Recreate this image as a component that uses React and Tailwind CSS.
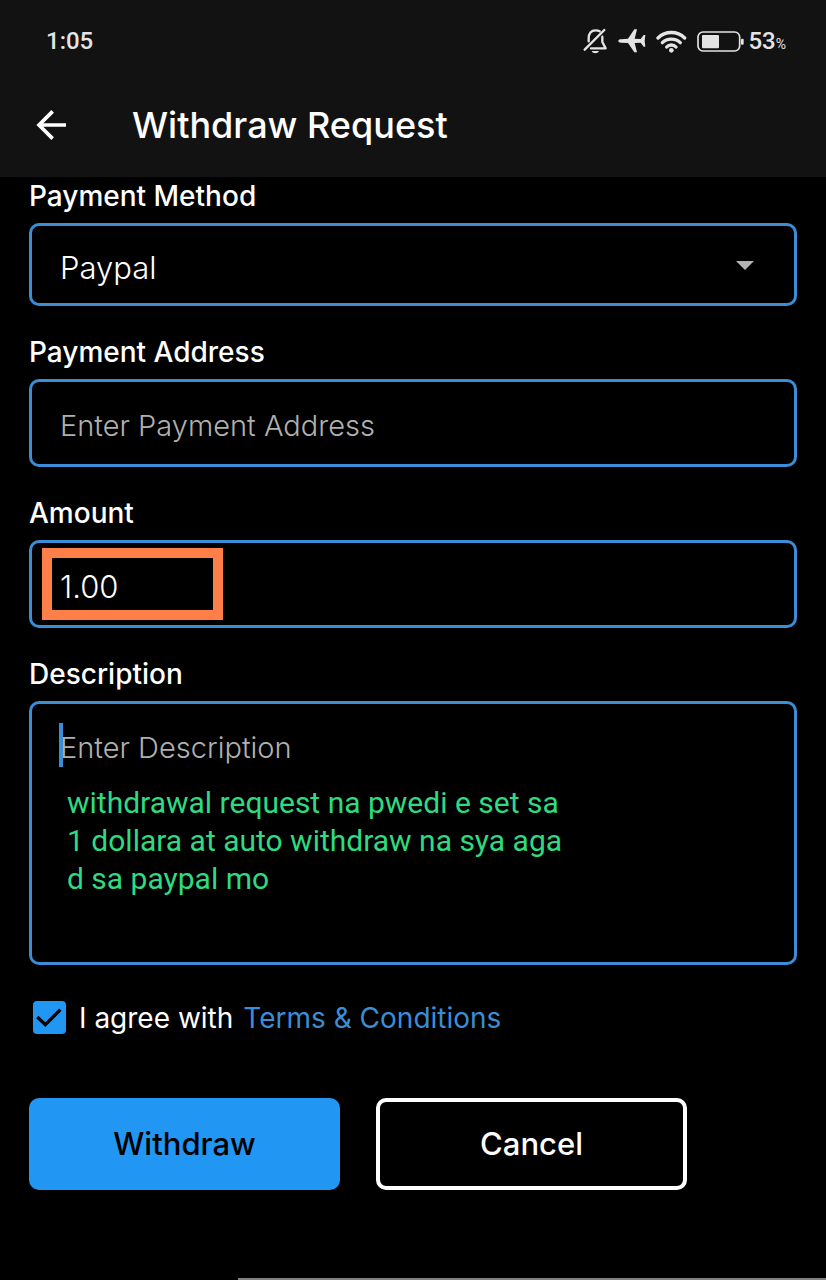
import React, { useState } from 'react';

const StatusBar = () => (
  <div className="flex items-center justify-between pt-[25px] pl-[46px] pr-10 font-[Roboto,sans-serif] text-[#e4e4e4]">
    <span className="text-2xl font-medium">1:05</span>
    <div className="flex items-center gap-[10px]">
      {/* silent mode */}
      <svg width="25" height="26" viewBox="78 50 75 78" fill="none" stroke="currentColor" strokeWidth="7" strokeLinecap="round" strokeLinejoin="round">
        <path d="M83 115L142 56" />
        <path d="M95 90V82C95 66 103 57 116 57c5 0 9 1 12 3" />
        <path d="M136 76V92l10 19H102" />
        <path d="M104 119h22c-4 9-18 9-22 0z" fill="currentColor" stroke="none" />
      </svg>
      {/* airplane mode */}
      <svg width="28" height="24" viewBox="180 53 84 72" fill="currentColor">
        <path d="M181 89c0-3 3-5 8-5l21-2 19-28h8l-7 28 18 1 9-12h5l-2 18 2 17h-5l-9-12-18 1 7 28h-8l-19-28-21-1c-5 0-8-2-8-5z" />
      </svg>
      {/* wifi */}
      <svg width="31" height="23" viewBox="290 54 93 69" fill="none" stroke="currentColor" strokeWidth="10" strokeLinecap="round">
        <path d="M296 78C318 56 354 56 376 78" />
        <path d="M309 92C323 78 349 78 363 92" />
        <path d="M322 105C329 97 343 97 350 105" />
        <circle cx="336" cy="115" r="7" fill="currentColor" stroke="none" />
      </svg>
      <div className="flex items-center gap-1">
        <svg width="47" height="21" viewBox="411 57 141 63" fill="currentColor">
          <rect x="414" y="60" width="125" height="57" rx="15" fill="none" stroke="currentColor" strokeWidth="5" />
          <rect x="426" y="69" width="51" height="40" rx="3" />
          <rect x="543" y="80" width="8" height="18" rx="3" />
        </svg>
        <span className="flex items-baseline">
          <span className="text-2xl font-medium">53</span>
          <span className="text-sm">%</span>
        </span>
      </div>
    </div>
  </div>
);

const Field = ({ id, label, children }) => (
  <div className="mb-[30px]">
    <label htmlFor={id} className="mb-[11px] block text-[28px] leading-8 font-medium text-white">
      {label}
    </label>
    <div className="relative">{children}</div>
  </div>
);

const App = () => {
  const [method, setMethod] = useState('Paypal');
  const [address, setAddress] = useState('');
  const [amount, setAmount] = useState('1.00');
  const [description, setDescription] = useState('');
  const [agreed, setAgreed] = useState(true);

  return (
    <div className="flex min-h-screen flex-col bg-black font-[Inter,sans-serif] text-white">
      <header className="bg-[#121212] pb-8">
        <StatusBar />
        <div className="mt-12 flex items-center pl-9">
          <button type="button" aria-label="Back">
            <svg width="30" height="30" viewBox="108 302 90 90" fill="none" stroke="currentColor" strokeWidth="11">
              <path d="M198 347H117M158 306L117 347L158 388" />
            </svg>
          </button>
          <h1 className="ml-[66px] text-[36px] leading-10 font-medium">Withdraw Request</h1>
        </div>
      </header>

      <form className="flex-1 px-[29px] pt-[3px]" onSubmit={e => e.preventDefault()}>
        <Field id="method" label="Payment Method">
          <select
            id="method"
            value={method}
            onChange={e => setMethod(e.target.value)}
            className="block h-[83px] w-full appearance-none rounded-[10px] border-3 border-[#3b8dd6] bg-black pt-2 pl-7 text-[31px] font-light outline-none"
          >
            <option value="Paypal">Paypal</option>
          </select>
          <svg className="pointer-events-none absolute top-[38px] right-[43px]" width="18" height="9" viewBox="0 0 18 9" fill="#b3b3b3">
            <path d="M0 0h18L9 9z" />
          </svg>
        </Field>

        <Field id="address" label="Payment Address">
          <input
            id="address"
            type="text"
            value={address}
            onChange={e => setAddress(e.target.value)}
            placeholder="Enter Payment Address"
            className="block h-[88px] w-full rounded-[10px] border-3 border-[#3b8dd6] bg-black pt-1 pl-7 text-[29px] font-light outline-none placeholder:text-[#b0b0b0]"
          />
        </Field>

        <Field id="amount" label="Amount">
          <input
            id="amount"
            type="text"
            value={amount}
            onChange={e => setAmount(e.target.value)}
            className="block h-[88px] w-full rounded-[10px] border-3 border-[#3b8dd6] bg-black pt-1 pl-7 text-[31px] font-light outline-none"
          />
          <div className="pointer-events-none absolute top-2 left-[13px] h-[72px] w-[181px] border-[10px] border-[#ff7f48]" />
        </Field>

        <Field id="description" label="Description">
          <textarea
            id="description"
            value={description}
            onChange={e => setDescription(e.target.value)}
            placeholder="Enter Description"
            className="block h-[264px] w-full resize-none rounded-[10px] border-3 border-[#3b8dd6] bg-black pt-6 pl-7 text-[29px] leading-10 font-light outline-none placeholder:text-[#b0b0b0]"
          />
          <div className="pointer-events-none absolute top-[22px] left-[30px] h-11 w-1 bg-[#3b8dd6]" />
          <p className="pointer-events-none absolute top-[83px] left-[38px] font-[Roboto,sans-serif] text-[30px] leading-[38px] text-[#2edb80]">
            withdrawal request na pwedi e set sa<br />
            1 dollara at auto withdraw na sya aga<br />
            d sa paypal mo
          </p>
        </Field>

        <div className="flex items-center pt-[6px] pl-1">
          <div className="relative size-[33px]">
            <input
              id="agree"
              type="checkbox"
              checked={agreed}
              onChange={e => setAgreed(e.target.checked)}
              className="block size-[33px] appearance-none rounded-[4px] border-2 border-[#2196f3] checked:bg-[#2196f3]"
            />
            {agreed && (
              <svg className="pointer-events-none absolute inset-0" width="33" height="33" viewBox="96 183 99 99" fill="none" stroke="black" strokeWidth="10">
                <path d="M109 231L133 254L178 209" />
              </svg>
            )}
          </div>
          <label htmlFor="agree" className="ml-[13px] text-[28px] leading-8">I agree with</label>
          <a href="#terms" className="ml-[10px] text-[28px] leading-8 text-[#3b8dd6]">Terms &amp; Conditions</a>
        </div>

        <div className="mt-16 flex gap-9">
          <button type="submit" className="h-[92px] max-w-[311px] flex-1 rounded-[10px] bg-[#2196f3] text-[31px] font-medium text-black">
            Withdraw
          </button>
          <button type="button" className="h-[92px] max-w-[311px] flex-1 rounded-[10px] border-4 border-white text-[31px] font-medium">
            Cancel
          </button>
        </div>
      </form>

      <div className="ml-[238px] h-[2px] bg-[#808080]" />
    </div>
  );
};

export default App;
